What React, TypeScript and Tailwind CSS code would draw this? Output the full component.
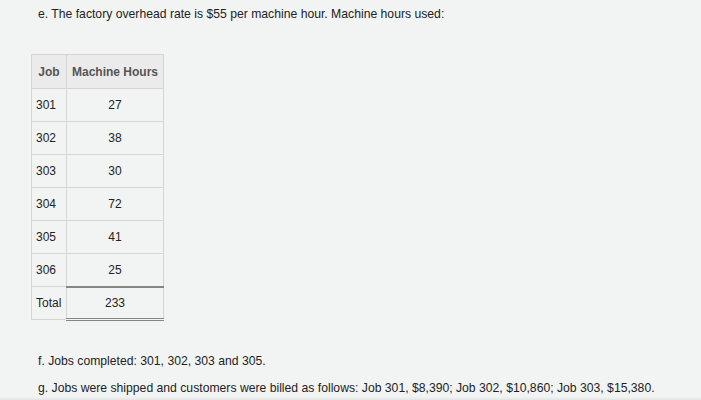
import React from "react";

const rows = [
  ["301", "27"],
  ["302", "38"],
  ["303", "30"],
  ["304", "72"],
  ["305", "41"],
  ["306", "25"],
];

export default function App() {
  return (
    <div
      className="w-[701px] h-[400px] bg-[#f2f4f4] text-[#222] text-[12px] flex flex-col overflow-hidden"
      style={{ fontFamily: '"Liberation Sans", Arial, sans-serif' }}
    >
      <div className="pl-[38px] pt-[5px] leading-[18px] text-[12.2px]">
        e. The factory overhead rate is $55 per machine hour. Machine hours used:
      </div>
      <div className="pl-[31px] pt-[31px]">
        <table className="border-collapse">
          <thead>
            <tr className="h-[34px] bg-[#ebebeb]">
              <th className="w-[35px] border border-[#d3d6d6] font-bold text-[#555] text-center px-0">Job</th>
              <th className="w-[97px] border border-[#d3d6d6] font-bold text-[#555] text-center px-0">Machine Hours</th>
            </tr>
          </thead>
          <tbody>
            {rows.map(([j, h]) => (
              <tr key={j} className="h-[33px]">
                <td className="border border-[#d3d6d6] pl-[4px] text-left">{j}</td>
                <td className="border border-[#d3d6d6] text-center">{h}</td>
              </tr>
            ))}
            <tr className="h-[33px]">
              <td className="border border-[#d3d6d6] pl-[4px] text-left">Total</td>
              <td className="border border-[#d3d6d6] border-t-2 border-t-[#858585] border-b-[3px] border-b-[#858585] [border-bottom-style:double] text-center">233</td>
            </tr>
          </tbody>
        </table>
      </div>
      <div className="pl-[38px] pt-[31px] leading-[18px] text-[12.2px]">f. Jobs completed: 301, 302, 303 and 305.</div>
      <div className="pl-[38px] pt-[9px] leading-[18px] text-[12.2px]">
        g. Jobs were shipped and customers were billed as follows: Job 301, $8,390; Job 302, $10,860; Job 303, $15,380.
      </div>
      <div className="flex-1" />
      <div className="h-[4px] bg-gradient-to-b from-[#f2f4f4] to-[#e2e4e4]" />
    </div>
  );
}
